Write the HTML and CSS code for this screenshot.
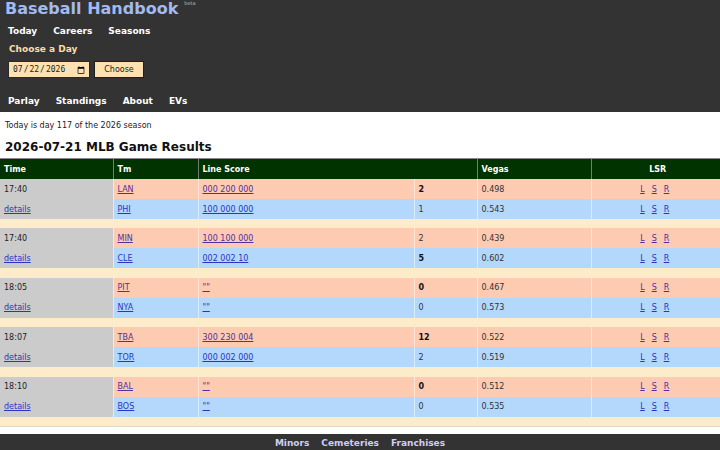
FILE: index.html
```html
<!DOCTYPE html>
<html>
<head>
<meta charset="utf-8">
<title>Baseball Handbook</title>
<link rel="stylesheet" href="styles.css">
</head>
<body>
<header class="top">
  <h1 class="brand"><a href="#">Baseball Handbook</a><sup class="beta">beta</sup></h1>
  <nav class="nav nav-first">
    <a href="#">Today</a><a href="#">Careers</a><a href="#">Seasons</a>
  </nav>
  <div class="choose-label">Choose a Day</div>
  <form class="day-form">
    <input class="day-input" type="date" value="2026-07-22">
    <button class="day-btn" type="button">Choose</button>
  </form>
  <nav class="nav nav-second">
    <a href="#">Parlay</a><a href="#">Standings</a><a href="#">About</a><a href="#">EVs</a>
  </nav>
</header>

<main class="content">
  <p class="today">Today is day 117 of the 2026 season</p>
  <h2 class="results-title">2026-07-21 MLB Game Results</h2>
</main>

<table class="games">
  <colgroup>
    <col class="c-time"><col class="c-tm"><col class="c-line"><col class="c-runs"><col class="c-vegas"><col class="c-lsr">
  </colgroup>
  <thead>
    <tr><th>Time</th><th>Tm</th><th colspan="2">Line Score</th><th>Vegas</th><th class="center">LSR</th></tr>
  </thead>
  <tbody>
    <tr class="away"><td class="time">17:40</td><td><a href="#">LAN</a></td><td><a href="#">000 200 000</a></td><td class="win">2</td><td>0.498</td><td class="lsr"><span><a href="#">L</a><a href="#">S</a><a href="#">R</a></span></td></tr>
    <tr class="home"><td class="time"><a href="#">details</a></td><td><a href="#">PHI</a></td><td><a href="#">100 000 000</a></td><td>1</td><td>0.543</td><td class="lsr"><span><a href="#">L</a><a href="#">S</a><a href="#">R</a></span></td></tr>
    <tr class="gap"><td colspan="6"></td></tr>

    <tr class="away"><td class="time">17:40</td><td><a href="#">MIN</a></td><td><a href="#">100 100 000</a></td><td>2</td><td>0.439</td><td class="lsr"><span><a href="#">L</a><a href="#">S</a><a href="#">R</a></span></td></tr>
    <tr class="home"><td class="time"><a href="#">details</a></td><td><a href="#">CLE</a></td><td><a href="#">002 002 10</a></td><td class="win">5</td><td>0.602</td><td class="lsr"><span><a href="#">L</a><a href="#">S</a><a href="#">R</a></span></td></tr>
    <tr class="gap"><td colspan="6"></td></tr>

    <tr class="away"><td class="time">18:05</td><td><a href="#">PIT</a></td><td><a href="#">""</a></td><td class="win">0</td><td>0.467</td><td class="lsr"><span><a href="#">L</a><a href="#">S</a><a href="#">R</a></span></td></tr>
    <tr class="home"><td class="time"><a href="#">details</a></td><td><a href="#">NYA</a></td><td><a href="#">""</a></td><td>0</td><td>0.573</td><td class="lsr"><span><a href="#">L</a><a href="#">S</a><a href="#">R</a></span></td></tr>
    <tr class="gap"><td colspan="6"></td></tr>

    <tr class="away"><td class="time">18:07</td><td><a href="#">TBA</a></td><td><a href="#">300 230 004</a></td><td class="win">12</td><td>0.522</td><td class="lsr"><span><a href="#">L</a><a href="#">S</a><a href="#">R</a></span></td></tr>
    <tr class="home"><td class="time"><a href="#">details</a></td><td><a href="#">TOR</a></td><td><a href="#">000 002 000</a></td><td>2</td><td>0.519</td><td class="lsr"><span><a href="#">L</a><a href="#">S</a><a href="#">R</a></span></td></tr>
    <tr class="gap"><td colspan="6"></td></tr>

    <tr class="away"><td class="time">18:10</td><td><a href="#">BAL</a></td><td><a href="#">""</a></td><td class="win">0</td><td>0.512</td><td class="lsr"><span><a href="#">L</a><a href="#">S</a><a href="#">R</a></span></td></tr>
    <tr class="home"><td class="time"><a href="#">details</a></td><td><a href="#">BOS</a></td><td><a href="#">""</a></td><td>0</td><td>0.535</td><td class="lsr"><span><a href="#">L</a><a href="#">S</a><a href="#">R</a></span></td></tr>
    <tr class="gap last"><td colspan="6"></td></tr>
  </tbody>
</table>

<footer class="foot">
  <a href="#">Minors</a><a href="#">Cemeteries</a><a href="#">Franchises</a>
</footer>
</body>
</html>
```

FILE: styles.css
```css
html, body {
  margin: 0;
  padding: 0;
  background: #ffffff;
  font-family: "DejaVu Sans", Verdana, sans-serif;
  color: #222;
}

.top {
  background: #333333;
  padding: 0 0 4px 0;
}

.brand {
  margin: 0;
  padding-left: 5px;
  font-size: 16px;
  line-height: 18px;
  font-weight: bold;
}
.brand a {
  color: #a2baf0;
  text-decoration: none;
}
.beta {
  font-size: 5px;
  color: #bbbbbb;
  font-weight: normal;
  vertical-align: top;
  margin-left: 6px;
  line-height: 6px;
}

.nav {
  display: flex;
  gap: 16px;
  padding-left: 8px;
  font-size: 9px;
  line-height: 14px;
  font-weight: bold;
}
.nav a {
  color: #ffffff;
  text-decoration: none;
}
.nav-first {
  margin-top: 6px;
}
.nav-second {
  margin-top: 16px;
}

.choose-label {
  margin-top: 4px;
  padding-left: 9px;
  font-size: 9px;
  line-height: 14px;
  font-weight: bold;
  color: #fbdea6;
}

.day-form {
  display: flex;
  gap: 4px;
  margin: 5px 0 0 8px;
}
.day-input {
  box-sizing: border-box;
  width: 82px;
  height: 17px;
  margin: 0;
  padding: 0 2px 0 3px;
  font-family: "DejaVu Sans Mono", monospace;
  font-size: 8px;
  color: #222;
  background: #fde1b0;
  border: 1px solid #2a2a2a;
  border-radius: 0;
}
.day-btn {
  box-sizing: border-box;
  width: 50px;
  height: 17px;
  margin: 0;
  padding: 0;
  font-family: "DejaVu Sans", sans-serif;
  font-size: 8px;
  color: #222;
  background: #fde1b0;
  border: 1px solid #1e1e1e;
  border-radius: 0;
}

.content {
  padding: 0 5px;
}
.today {
  margin: 9px 0 0 0;
  font-size: 8px;
  line-height: 10px;
}
.results-title {
  margin: 9px 0 4px 0;
  font-size: 12px;
  line-height: 14px;
  font-weight: bold;
  color: #111;
}

.games {
  width: 720px;
  border-collapse: collapse;
  table-layout: fixed;
  font-size: 8px;
}
.c-time { width: 113px; }
.c-tm { width: 85px; }
.c-line { width: 216px; }
.c-runs { width: 63px; }
.c-vegas { width: 114px; }
.c-lsr { width: 129px; }

.games th {
  background: #013300;
  color: #ffffff;
  font-weight: bold;
  text-align: left;
  height: 20px;
  padding: 0 0 0 4px;
  border-left: 1px solid #6f806f;
  border-top: 1px solid #8a8a8a;
}
.games th:first-child { border-left: none; }
.games th.center { text-align: center; }

.games td {
  height: 20px;
  padding: 0 0 0 4px;
  border-left: 1px solid rgba(255, 255, 255, 0.5);
  color: #333;
}
.games td:first-child { border-left: none; }

.away td { background: #fdcbb1; }
.home td { background: #b3d8fc; }
.games td.time {
  background: #cbcbcb;
  color: #222;
}
.games td.win {
  font-weight: bold;
  color: #111;
}

.away a { color: #52309e; }
.home a { color: #2a35c4; }
.games td.time a { color: #2a35c4; }

.gap td {
  height: 9.4px;
  padding: 0;
  background: #fdecc9;
}
.gap.last td {
  border-bottom: 1px solid #e3d8c6;
}

.lsr {
  text-align: center;
}
.games td.lsr {
  padding: 0 2px 0 0;
}
.lsr span {
  display: inline-flex;
  gap: 7px;
  font-size: 8px;
}

.foot {
  margin-top: 7px;
  background: #333333;
  display: flex;
  justify-content: center;
  gap: 12px;
  font-size: 9px;
  line-height: 18px;
  font-weight: bold;
}
.foot a {
  color: #cfcdf5;
  text-decoration: none;
}
```
